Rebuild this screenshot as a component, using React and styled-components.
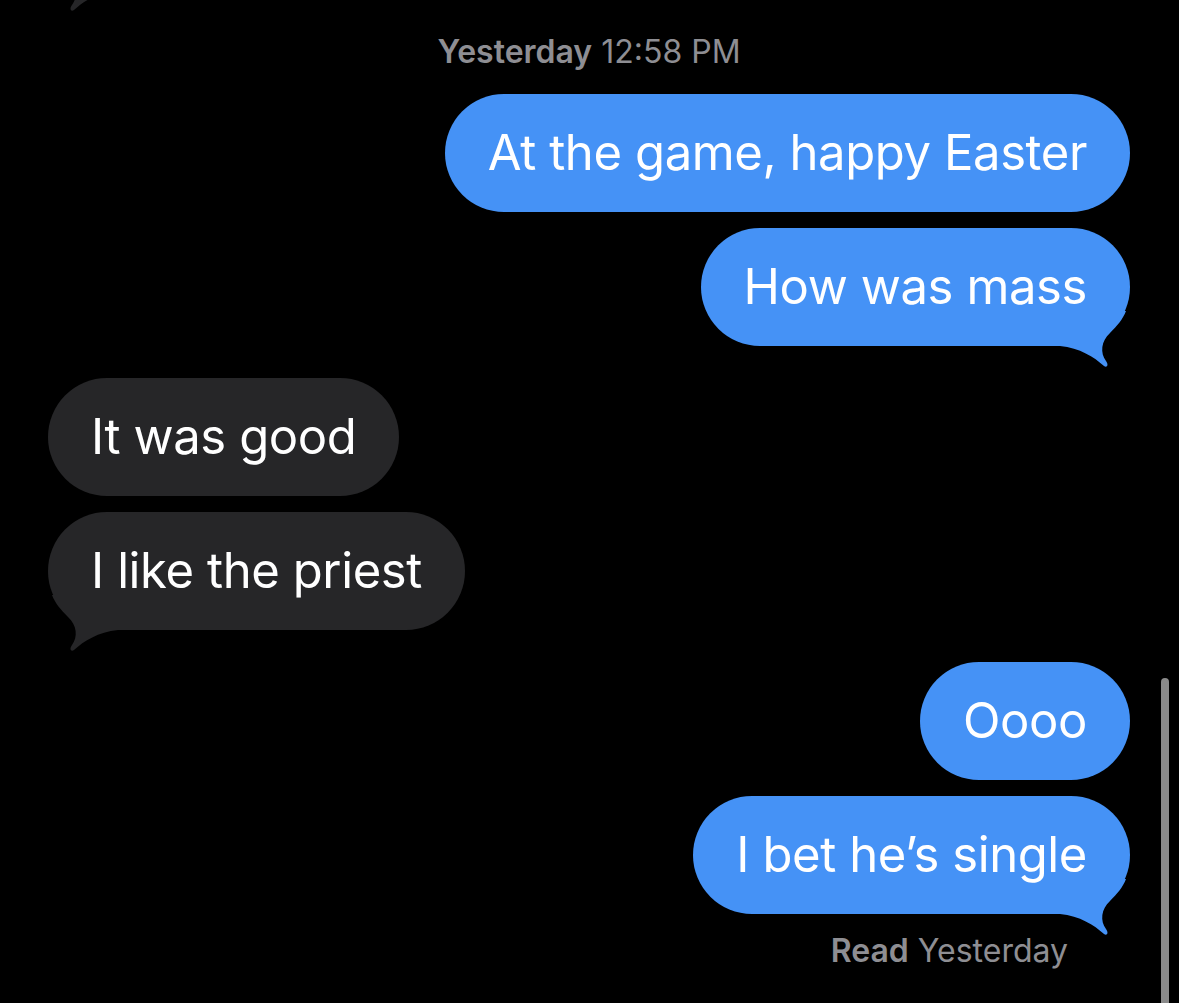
import React from "react";
import styled, { createGlobalStyle } from "styled-components";

const GlobalStyle = createGlobalStyle`
  html, body {
    margin: 0;
    padding: 0;
    background: #000;
  }
  body {
    font-family: Inter, "Noto Sans", sans-serif;
    -webkit-font-smoothing: antialiased;
  }
`;

const BLUE = "#4592f6";
const GRAY = "#262628";

const thread = [
  {
    id: "g1",
    items: [
      { text: "At the game, happy Easter", mine: true },
      { text: "How was mass", mine: true, tail: true },
    ],
  },
  {
    id: "g2",
    items: [
      { text: "It was good", mine: false },
      { text: "I like the priest", mine: false, tail: true },
    ],
  },
  {
    id: "g3",
    items: [
      { text: "Oooo", mine: true },
      { text: "I bet he\u2019s single", mine: true, tail: true },
    ],
  },
];

const Tail = ({ mine }) => (
  <TailSvg $mine={mine} width="80" height="60" viewBox="0 0 80 60">
    <path
      d="M10 0 L10 35 C30 37 44 46 54 55 C57 57 59 54 56 50 C50 42 51 30 60 22 C67 15 73 8 76 0 Z"
      fill={mine ? BLUE : GRAY}
    />
  </TailSvg>
);

const App = () => {
  return (
    <Screen>
      <GlobalStyle />
      <Conversation>
        {/* bottom of the previous incoming bubble, scrolled out of view */}
        <Row $mine={false}>
          <Bubble $mine={false} $offscreen>
            <Tail mine={false} />
          </Bubble>
        </Row>
        <Stamp>
          <strong>Yesterday</strong> 12:58 PM
        </Stamp>
        {thread.map((group, i) => (
          <Group key={group.id} $first={i === 0}>
            {group.items.map((m) => (
              <Row key={m.text} $mine={m.mine}>
                <Bubble $mine={m.mine}>
                  {m.text}
                  {m.tail && <Tail mine={m.mine} />}
                </Bubble>
              </Row>
            ))}
          </Group>
        ))}
        <Receipt>
          <strong>Read</strong> Yesterday
        </Receipt>
      </Conversation>
      <ScrollThumb />
    </Screen>
  );
};

const Screen = styled.div`
  position: relative;
  width: 1179px;
  height: 1003px;
  overflow: hidden;
  background: #000;
`;

const Conversation = styled.div`
  display: flex;
  flex-direction: column;
  padding: 0 49px 0 48px;
`;

const Stamp = styled.div`
  height: 41px;
  line-height: 41px;
  text-align: center;
  color: #8e8e93;
  font-size: 32px;
  font-weight: 400;

  strong {
    font-weight: 600;
  }
`;

const Group = styled.div`
  display: flex;
  flex-direction: column;
  gap: 16px;
  margin-top: ${(p) => (p.$first ? "22px" : "32px")};
`;

const Row = styled.div`
  display: flex;
  justify-content: ${(p) => (p.$mine ? "flex-end" : "flex-start")};
`;

const Bubble = styled.div`
  position: relative;
  box-sizing: border-box;
  height: 118px;
  min-width: ${(p) => (p.$offscreen ? "300px" : "0")};
  padding: 0 43px;
  border-radius: 59px;
  background: ${(p) => (p.$mine ? BLUE : GRAY)};
  color: #fff;
  font-size: 49px;
  line-height: 118px;
  letter-spacing: -0.4px;
  white-space: nowrap;
  margin-top: ${(p) => (p.$offscreen ? "-128px" : "0")};
  margin-bottom: ${(p) => (p.$offscreen ? "41px" : "0")};
`;

const TailSvg = styled.svg`
  position: absolute;
  bottom: -25px;
  ${(p) => (p.$mine ? "right: 0;" : "left: 0; transform: scaleX(-1);")}
`;

const Receipt = styled.div`
  align-self: flex-end;
  margin-top: 19px;
  margin-right: 62px;
  color: #8e8e93;
  font-size: 32px;
  line-height: 36px;

  strong {
    font-weight: 600;
  }
`;

const ScrollThumb = styled.div`
  position: absolute;
  left: 1161px;
  top: 678px;
  width: 8px;
  height: 340px;
  border-radius: 4px;
  background: #8a8a8a;
`;

export default App;
